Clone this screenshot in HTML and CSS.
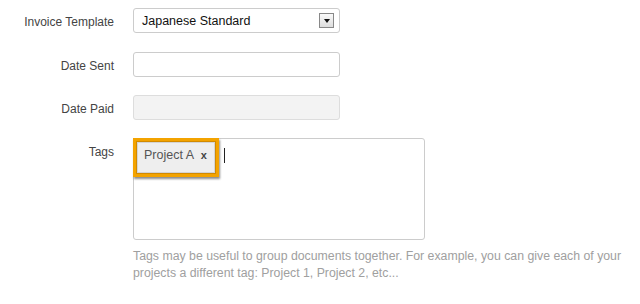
FILE: index.html
```html
<!DOCTYPE html>
<html lang="en">
<head>
    <meta charset="UTF-8">
    <meta name="viewport" content="width=device-width, initial-scale=1.0">
    <title>Invoice</title>
    <link rel="stylesheet" href="styles.css">
</head>
<body>
    <form class="invoice-form">
        <div class="row row-first">
            <label class="label">Invoice Template</label>
            <div class="select">
                <span>Japanese Standard</span>
                <span class="select-btn"><span class="arrow"></span></span>
            </div>
        </div>
        <div class="row">
            <label class="label">Date Sent</label>
            <div class="input"></div>
        </div>
        <div class="row">
            <label class="label">Date Paid</label>
            <div class="input disabled"></div>
        </div>
        <div class="row">
            <label class="label">Tags</label>
            <div class="tags-col">
                <div class="tags-box">
                    <span class="highlight">
                        <span class="tag">Project A <b class="tag-x">x</b></span>
                    </span>
                    <span class="caret"></span>
                </div>
                <p class="help">Tags may be useful to group documents together. For example, you can give each of your projects a different tag: Project 1, Project 2, etc...</p>
            </div>
        </div>
    </form>
</body>
</html>
```

FILE: styles.css
```css
body {
    margin: 0;
    background: #fff;
    font-family: "Liberation Sans", Arial, sans-serif;
    font-size: 12px;
    color: #333;
}

.invoice-form {
    padding-top: 8px;
}

.row {
    display: flex;
    align-items: flex-start;
    margin-bottom: 18px;
}

.row-first {
    margin-bottom: 19px;
}

.label {
    width: 114px;
    text-align: right;
    margin-right: 19px;
    padding-top: 3px;
    line-height: 22px;
    color: #444;
    flex-shrink: 0;
}

.select, .input {
    box-sizing: border-box;
    width: 207px;
    height: 25px;
    border: 1px solid #ccc;
    border-radius: 3px;
    background: #fff;
}

.select {
    display: flex;
    align-items: center;
    justify-content: space-between;
    padding: 0 5px 0 8px;
    font-size: 12.5px;
    color: #111;
}

.select-btn {
    box-sizing: border-box;
    width: 15px;
    height: 15px;
    border: 1px solid #888;
    background: linear-gradient(#fafafa, #ddd);
    display: flex;
    align-items: center;
    justify-content: center;
}

.arrow {
    width: 0;
    height: 0;
    border-left: 3px solid transparent;
    border-right: 3px solid transparent;
    border-top: 4px solid #111;
}

.input.disabled {
    background: #f3f3f3;
    border-color: #ddd;
}

.tags-box {
    box-sizing: border-box;
    width: 292px;
    height: 102px;
    border: 1px solid #ccc;
    border-radius: 3px;
    display: flex;
    align-items: flex-start;
}

.highlight {
    margin: -1px 0 0 -1px;
    border: 3px solid #f3a300;
    box-shadow: 1px 2px 2px rgba(0, 0, 0, 0.45), inset 0 0 0 1px #d28a00;
    padding: 1px;
    display: inline-flex;
}

.tag {
    display: inline-block;
    background: #eee;
    border: 1px solid #d4d4d4;
    padding: 4px 7px 8px 6px;
    font-size: 12.5px;
    line-height: 17px;
    color: #555;
}

.tag-x {
    font-size: 11px;
    margin-left: 4px;
    color: #444;
}

.caret {
    width: 1px;
    height: 15px;
    background: #222;
    margin: 9px 0 0 5px;
}

.help {
    margin: 8px 0 0;
    width: 500px;
    font-size: 12.3px;
    line-height: 17px;
    color: #a0a0a0;
}
```
